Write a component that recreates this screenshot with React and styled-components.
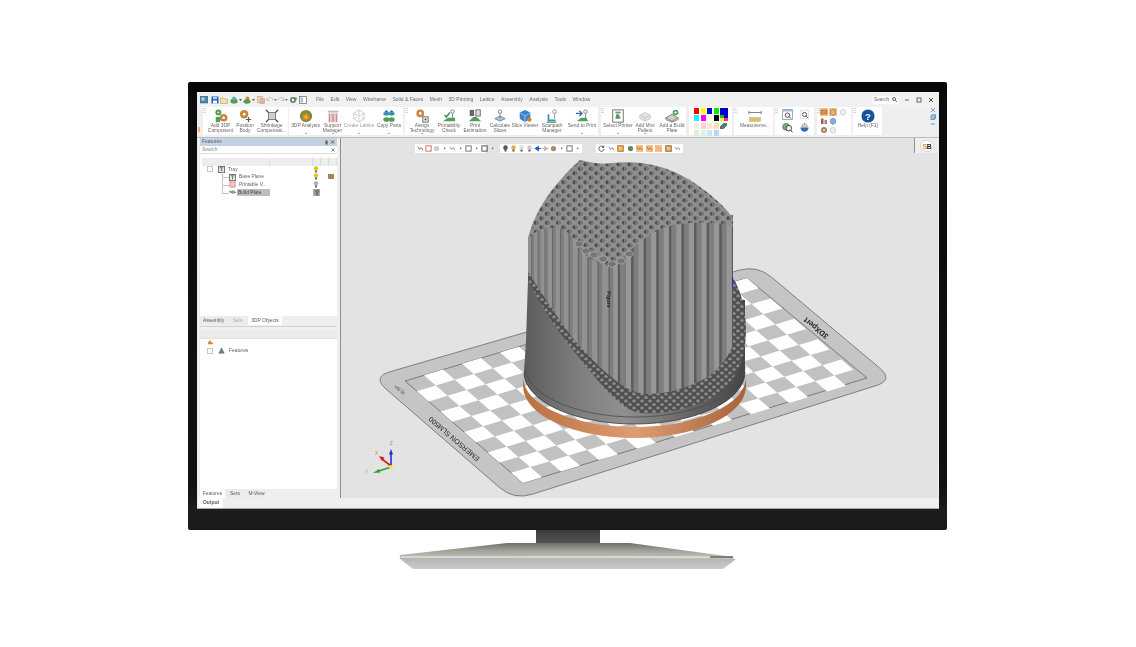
import React from "react";
import styled, { createGlobalStyle } from "styled-components";

const Global = createGlobalStyle`
  html, body { margin: 0; padding: 0; background: #fff; }
  body { font-family: "Liberation Sans", Arial, sans-serif; }
  #root { width: 1136px; height: 647px; overflow: hidden; }
`;

const Page = styled.div`
  width: 1136px; height: 647px; padding-top: 82px; box-sizing: border-box;
  display: flex; flex-direction: column; align-items: center; background: #fff;
`;
const Monitor = styled.div`
  width: 759px; height: 448px; box-sizing: border-box; margin-left: -1px;
  padding: 10px 8px 21px 9px; border-radius: 2px;
  background: linear-gradient(#060606 0, #0b0b0b 20px, #111 400px, #1c1c1c 428px, #191919 100%);
`;
const StandArt = styled.svg`
  display: block; width: 340px; height: 42px; margin-left: -1px; flex: none;
`;
const Screen = styled.div`
  width: 742px; height: 417px; background: #efefef; display: flex; flex-direction: column;
  overflow: hidden; filter: blur(0.35px); color: #555; font-size: 4.9px; line-height: 5.4px;
`;
const TitleBar = styled.div`
  height: 15px; flex: none; display: flex; align-items: center; padding: 0 4px 0 3px; background: #f1f1f1;
`;
const Quick = styled.div`
  display: flex; align-items: center; width: 116px; flex: none;
`;
const QuickIcon = styled.svg`
  width: ${p => p.$w || 8}px; height: 8px; flex: none; display: block; margin-right: ${p => p.$mr}px;
`;
const Menu = styled.nav`
  display: flex; gap: 6.5px; color: #6b6b6b; font-size: 5px;
`;
const SearchBox = styled.div`
  margin-left: auto; width: 27px; height: 8px; background: #fff; display: flex; align-items: center;
  justify-content: space-between; padding: 0 2px; box-sizing: border-box; color: #666; font-size: 4.8px;
`;
const WinButtons = styled.div`
  display: flex; margin-left: 5px; gap: 5px; align-items: center;
`;
const RibbonRow = styled.div`
  height: 29px; flex: none; display: flex; padding: 0 0 1px 6px; position: relative;
  border-bottom: 1px solid #bdbdbd;
`;
const Tick = styled.span`
  position: absolute; left: 1px; top: 20px; width: 1.5px; height: 5px; background: #f3b36f;
`;
const Group = styled.div`
  display: flex; background: #fff; height: 28px; flex: none; position: relative; width: ${p => p.$w}px;
  margin-right: ${p => p.$mr}px;
`;
const Grip = styled.div`
  width: 3px; flex: none; margin-top: 1px; height: 6px;
  background: repeating-linear-gradient(#cfdbe7 0 1px, #fff 1px 2px);
`;
const Tool = styled.div`
  width: ${p => p.$w}px; flex: none; display: flex; flex-direction: column; align-items: center;
  text-align: center; color: ${p => (p.$muted ? "#9a9a9a" : "#666")}; position: relative; white-space: nowrap;
`;
const ToolIcon = styled.div`
  height: 15px; flex: none; display: flex; align-items: center; justify-content: center; padding-top: 1px;
  & > svg { width: 14px; height: 14px; display: block; }
`;
const Caret = styled.span`
  position: absolute; bottom: 1px; left: 50%; margin-left: -1px; width: 0; height: 0;
  border-left: 1px solid transparent; border-right: 1px solid transparent; border-top: 1.5px solid #555;
`;
const Palette = styled.div`
  display: grid; grid-template-columns: repeat(4, 6.5px) 8px; grid-template-rows: 7px 8px 7px 6px;
  padding: 1px 0 0 5px; align-items: start;
`;
const Swatch = styled.div`
  background: ${p => p.$c}; height: ${p => p.$h || 5.5}px; width: ${p => p.$w || 5.4}px;
`;
const IconGrid = styled.div`
  display: grid; grid-template-columns: repeat(${p => p.$cols}, 1fr); flex: 1; padding: ${p => p.$pad};
  align-items: center; justify-items: center; gap: 1px;
  & svg { width: ${p => p.$size}px; height: ${p => p.$size}px; display: block; }
`;
const Cell = styled.div`
  background: ${p => (p.$on ? "#f9bd7c" : "transparent")}; display: flex;
`;
const SideIcons = styled.div`
  position: absolute; right: 3px; top: 0; display: flex; flex-direction: column; gap: 1px;
  & svg { width: 6px; height: 6px; display: block; }
`;
const Main = styled.div`
  flex: 1; min-height: 0; display: flex; background: #efefef;
`;
const Side = styled.aside`
  width: 143px; flex: none; display: flex; flex-direction: column; padding: 0 3px 0 3px; box-sizing: border-box;
`;
const PanelHead = styled.div`
  height: 8px; flex: none; background: #c5d3e0; color: #54606c; display: flex; align-items: center;
  padding: 0 2px; justify-content: space-between; font-size: 5px;
`;
const Search = styled.div`
  height: 8px; flex: none; background: #fff; color: #8a8a8a; font-style: italic; display: flex; align-items: center;
  justify-content: space-between; padding: 0 2px; box-sizing: border-box; border-bottom: 1px solid #ddd;
`;
const TreeBox = styled.div`
  background: #fff; box-sizing: border-box; flex: ${p => (p.$basis ? `0 0 ${p.$basis}px` : "1")}; min-height: 0;
  padding: ${p => p.$top}px 0 0 2px; display: flex; flex-direction: column;
`;
const ColHead = styled.div`
  height: 8px; flex: none; background: #ededed; display: grid; grid-template-columns: 68px 43px 8px 7.5px 1fr;
  & > i { border-right: 1px solid #dcdcdc; display: block; }
`;
const Row = styled.div`
  height: 7.7px; flex: none; display: flex; align-items: center; padding-left: ${p => p.$indent}px; position: relative;
`;
const RowIcon = styled.svg`
  width: 7px; height: 7px; flex: none; margin-right: ${p => p.$mr}px; display: block;
`;
const RowLabel = styled.span`
  background: ${p => (p.$sel ? "#bdbdbd" : "transparent")}; color: ${p => (p.$sel ? "#444" : "#666")};
  padding: 1px 1px; width: ${p => (p.$sel ? "33px" : "auto")}; box-sizing: border-box; white-space: nowrap;
`;
const Cols = styled.div`
  position: absolute; left: 111px; top: 0; display: grid; grid-template-columns: 8px 7px 8px; align-items: center;
  & svg { width: 6px; height: 7px; display: block; }
`;
const Boxed = styled.div`
  background: ${p => (p.$on ? "#a8a8a8" : "transparent")}; width: 7px; height: 7.5px; display: flex; justify-content: center;
`;
const Expander = styled.span`
  width: 4px; height: 4px; background: #fff; border: 0.5px solid #c9c9c9; margin-right: 5px; flex: none; display: block;
`;
const Connector = styled.span`
  position: absolute; left: 20px; top: -3px; width: 6px; height: 7px;
  border-left: 0.6px solid #c4c4c4; border-bottom: 0.6px solid #c4c4c4;
`;
const Tabs = styled.div`
  display: flex; height: ${p => p.$h}px; flex: none; background: #efefef; border-bottom: ${p => (p.$line ? "1px solid #d2d2d2" : "0")};
  padding-bottom: ${p => (p.$line ? "1px" : "0")};
`;
const Tab = styled.div`
  width: ${p => p.$w}px; display: flex; align-items: center; justify-content: center; background: ${p => (p.$on ? "#fff" : "#ececec")};
  color: ${p => (p.$dim ? "#aaa" : "#5b5b5b")}; font-weight: ${p => (p.$bold ? 700 : 400)};
`;
const LowerBar = styled.div`
  height: 8px; margin: 3px 0 0; flex: none; background: #ebebeb; border-bottom: 1px solid #e0e0e0;
`;
const Viewport = styled.section`
  flex: 1; min-width: 0; background: #e3e3e3; border-left: 1px solid #8e8e8e; display: flex; flex-direction: column;
  position: relative; margin-right: 1px;
`;
const ViewTools = styled.div`
  height: 16px; flex: none; display: flex; align-items: center; padding: 4px 0 0 74px; box-sizing: border-box;
`;
const FloatBar = styled.div`
  display: flex; align-items: center; gap: 1px; height: 9px; background: #fff; padding: 0 2px;
  margin-right: ${p => p.$gap}px; width: ${p => p.$w}px; box-sizing: border-box; justify-content: space-between; flex: none;
`;
const FloatIcon = styled.svg`
  width: 7px; height: 7px; flex: none; display: block; background: ${p => (p.$on ? "#f9bd7c" : "none")};
`;
const Scene = styled.svg`
  flex: 1; min-height: 0; width: 100%; display: block;
`;
const LogoTab = styled.div`
  position: absolute; right: 0; top: 0; width: 23px; height: 15px; border-left: 1px solid #8e8e8e; background: #eee;
  display: flex; align-items: center; justify-content: center;
`;
const Output = styled.div`
  height: 11px; flex: none; display: flex; background: #efefef; padding-left: 2px; border-bottom: 1px solid #aaa; box-sizing: border-box;
`;

/* ---- icons ---- */
const Sv = ({ children }) => <svg viewBox="0 0 16 16">{children}</svg>;
const G = "#4f9d57", O = "#c9853c", B = "#2f6fb5";
const icons = {
  add: <Sv><circle cx="5" cy="4" r="3.4" fill={G} /><circle cx="5" cy="4" r="1.2" fill="#cfe6cf" /><circle cx="11" cy="10" r="4.4" fill={O} /><circle cx="11" cy="10" r="1.5" fill="#fff" /><rect x="2" y="9" width="5" height="6" fill={G} /></Sv>,
  pos: <Sv><circle cx="7" cy="6" r="4.8" fill={O} /><circle cx="7" cy="6" r="1.6" fill="#fff" /><path d="M12 9v6M9 12h6" stroke="#555" strokeWidth="1.4" /></Sv>,
  shr: <Sv><rect x="4" y="4" width="8" height="8" fill="#cfcfcf" stroke="#777" /><path d="M1 1l3 3M15 1l-3 3M1 15l3-3M15 15l-3-3" stroke="#444" strokeWidth="1.3" /></Sv>,
  ana: <Sv><circle cx="8" cy="8" r="7" fill="#6f8e37" /><circle cx="8" cy="9" r="4.4" fill="#d8812c" /><circle cx="8" cy="9" r="2" fill="#e2c22e" /></Sv>,
  sup: <Sv><rect x="2" y="2" width="12" height="2" fill="#b9b9b9" /><path d="M3 5h2v10H3zM7 5h2v10H7zM11 5h2v10h-2z" fill="#cf8f8f" /><path d="M5 5h2v10H5zM9 5h2v10H9z" fill="#e3c6c6" /></Sv>,
  lat: <Sv><path d="M8 1l6 4v6l-6 4-6-4V5zM2 5l12 6M14 5L2 11M8 1v14" fill="none" stroke="#d4d4d4" strokeWidth="1.2" /></Sv>,
  cpy: <Sv><path d="M5 1l3 3H2zM11 1l3 3H8z" fill={B} /><ellipse cx="5" cy="5.5" rx="3.5" ry="2" fill="#2f8fb5" /><ellipse cx="11" cy="5.5" rx="3.5" ry="2" fill="#2f8fb5" /><ellipse cx="5" cy="12" rx="3.5" ry="2.6" fill={G} /><ellipse cx="11" cy="12" rx="3.5" ry="2.6" fill={G} /></Sv>,
  asg: <Sv><circle cx="6" cy="5" r="4.4" fill={O} /><circle cx="6" cy="5" r="1.5" fill="#fff" /><rect x="9" y="9" width="6" height="6" fill="#fff" stroke="#555" /><rect x="11" y="11" width="2" height="2" fill="#333" /></Sv>,
  chk: <Sv><path d="M1 14l6-4h8v4z" fill={G} /><path d="M3 7l2 2 4-5" stroke={G} strokeWidth="2" fill="none" /><circle cx="12" cy="3" r="2" fill="none" stroke="#777" /><path d="M12 5v5" stroke="#777" /></Sv>,
  est: <Sv><rect x="2" y="1" width="5" height="7" fill="#666" /><rect x="9" y="1" width="5" height="7" fill="#ddd" stroke="#666" /><path d="M1 14l5-5h4l5 5z" fill={G} /></Sv>,
  cal: <Sv><path d="M2 11l6-3 6 3-6 3z" fill="#a9bdd1" stroke="#7a8a9a" /><circle cx="8" cy="3" r="2" fill="none" stroke="#777" /><path d="M8 5v5" stroke="#777" /></Sv>,
  vie: <Sv><path d="M8 1l6 3v7l-6 4-6-4V4z" fill="#3e7fcb" /><path d="M8 8l6-4M8 8L2 4M8 8v7" stroke="#aac9ea" /><circle cx="13" cy="12" r="2.5" fill="#d8812c" /></Sv>,
  scn: <Sv><circle cx="11" cy="3" r="2" fill="none" stroke="#888" /><path d="M11 5v6" stroke="#888" /><path d="M4 6v7h8" stroke="#3b93c4" strokeWidth="2" fill="none" /><path d="M2 15h11" stroke={G} strokeWidth="1.5" /></Sv>,
  snd: <Sv><path d="M1 5h6M5 2l3 3-3 3" stroke={B} strokeWidth="1.6" fill="none" /><path d="M2 14l5-4h6l2 4z" fill={G} /><circle cx="12" cy="3" r="2" fill="none" stroke="#777" /><path d="M12 5v5" stroke="#777" /></Sv>,
  prn: <Sv><rect x="2" y="1" width="12" height="14" fill="#fff" stroke="#666" /><path d="M5 11h6l-2-5H6z" fill={G} /><rect x="5" y="3" width="6" height="2" fill="#888" /></Sv>,
  pal: <Sv><path d="M2 7l6-3 6 3v4l-6 3-6-3z" fill="#e0e0e0" stroke="#ccc" /><path d="M2 7l6 3 6-3M8 10v4" fill="none" stroke="#ccc" /></Sv>,
  bld: <Sv><path d="M1 10l7-4 7 4-7 4z" fill="#cfcfcf" stroke="#777" /><path d="M1 10v2l7 3 7-3v-2" fill="none" stroke="#777" /><circle cx="12" cy="4" r="3.2" fill={G} /><path d="M12 2.5v3M10.5 4h3" stroke="#fff" /></Sv>,
  rul: <Sv><path d="M1 4h14M1 2v4M15 2v4" stroke="#777" fill="none" /><rect x="2" y="10" width="12" height="4" fill="#e2c067" stroke="#b99a4a" strokeWidth=".5" /></Sv>,
  win1: <Sv><rect x="1" y="1" width="14" height="14" fill="#fff" stroke="#6b7f93" /><rect x="1" y="1" width="14" height="2.5" fill="#9db6cf" /><circle cx="8" cy="9" r="3.2" fill="none" stroke="#444" strokeWidth="1.3" /><path d="M10 11l3 3" stroke="#444" strokeWidth="1.3" /></Sv>,
  win2: <Sv><rect x="2" y="2" width="12" height="12" fill="none" stroke="#bbb" strokeDasharray="2 1" /><circle cx="8" cy="8" r="3" fill="none" stroke="#444" strokeWidth="1.3" /><path d="M10 10l3 3" stroke="#444" strokeWidth="1.3" /></Sv>,
  cube: <Sv><circle cx="6" cy="7" r="5" fill="#77ad77" stroke="#3f7a3f" /><circle cx="10" cy="9" r="4" fill="#e8f3e8" stroke="#333" strokeWidth="1.2" /><path d="M13 12l2 3" stroke="#333" strokeWidth="1.4" /></Sv>,
  dome: <Sv><path d="M2 8h12a6 6 0 0 1-12 0z" fill={B} /><path d="M4 7a4 4 0 0 1 8 0z" fill="#e6e6e6" stroke="#888" /><path d="M8 1v3" stroke="#888" /></Sv>,
  or1: <Sv><rect x="2" y="4" width="12" height="8" fill="#d2955a" stroke="#8a5a2c" /></Sv>,
  or2: <Sv><path d="M3 5l5-3 5 3v7l-5 3-5-3z" fill="#d7b48c" stroke="#8a5a2c" /></Sv>,
  gr1: <Sv><path d="M3 5l5-3 5 3v7l-5 3-5-3z" fill="#ececec" stroke="#bbb" /></Sv>,
  bar: <Sv><rect x="2" y="3" width="5" height="11" fill="#b5564e" /><rect x="9" y="6" width="5" height="8" fill="#888" /></Sv>,
  cub: <Sv><path d="M3 5l5-3 5 3v7l-5 3-5-3z" fill="#7fb0d8" stroke="#4a6f90" /></Sv>,
  gea: <Sv><circle cx="8" cy="8" r="6" fill="#a2865f" /><circle cx="8" cy="8" r="2" fill="#eee" /></Sv>,
  help: <Sv><circle cx="8" cy="8" r="7.5" fill="#12539c" /><text x="8" y="12" fontSize="11" fontWeight="700" fill="#fff" textAnchor="middle" fontFamily="Liberation Sans">?</text></Sv>,
};

const T = ({ w, l, i, caret, muted }) => (
  <Tool $w={w} $muted={muted}>
    <ToolIcon>{icons[i]}</ToolIcon>
    {l.map(s => <span key={s}>{s}</span>)}
    {caret && <Caret />}
  </Tool>
);

const Bulb = ({ c = "#e8c31c" }) => (
  <svg viewBox="0 0 6 8"><circle cx="3" cy="2.7" r="2.5" fill={c} /><rect x="1.8" y="5" width="2.4" height="2.4" fill="#666" /></svg>
);

const quickSet = [
  { mr: 3, art: <g><rect width="8" height="7" fill="#4f86ad" stroke="#355" strokeWidth=".5" /><rect x="1.5" y="1.5" width="3" height="3" fill="#bcd" /></g> },
  { mr: 1, art: <g><rect x=".5" y=".5" width="7" height="7" fill="#1d62b3" /><rect x="2" y="4.5" width="4" height="3" fill="#fff" /><rect x="2" y="1" width="4" height="2" fill="#bcd6f0" /></g> },
  { mr: 2, art: <path d="M.5 2h3l1 1h3v4.5h-7z" fill="#f2e0a6" stroke="#a98f4a" strokeWidth=".5" /> },
  { mr: 1, art: <g><ellipse cx="4" cy="5" rx="3.6" ry="2.6" fill="#4f9d57" /><circle cx="4" cy="2.5" r="2" fill="#6ab0a0" /></g> },
  { w: 3, mr: 1, art: <path d="M0 3h3L1.5 5z" fill="#555" /> },
  { mr: 1, art: <g><circle cx="4.5" cy="2.4" r="2" fill="#d9823a" /><ellipse cx="4" cy="5.5" rx="3.5" ry="2.2" fill="#4f9d57" /></g> },
  { w: 3, mr: 2, art: <path d="M0 3h3L1.5 5z" fill="#555" /> },
  { mr: 1, art: <g><rect x=".5" y=".5" width="5" height="6" fill="#f1d8c8" stroke="#b97" strokeWidth=".6" /><rect x="3" y="2.5" width="4.5" height="5" fill="#e8b4a0" stroke="#b97" strokeWidth=".6" /></g> },
  { mr: 0, art: <path d="M1 4.5a3 3 0 0 1 6 0M1 1.5v3h3" stroke="#bbb" strokeWidth=".8" fill="none" /> },
  { w: 3, mr: 0, art: <path d="M0 3h3L1.5 5z" fill="#777" /> },
  { mr: 0, art: <path d="M7 4.5a3 3 0 0 0-6 0M7 1.5v3H4" stroke="#bbb" strokeWidth=".8" fill="none" /> },
  { w: 3, mr: 1, art: <path d="M0 3h3L1.5 5z" fill="#777" /> },
  { mr: 2, art: <g><circle cx="4" cy="4" r="3" fill="#777" /><circle cx="4" cy="4" r="1.2" fill="#fff" /><path d="M5 1l3 1-1 3" fill="#4f9d57" /></g> },
  { mr: 0, art: <g><rect x=".5" y=".5" width="7" height="7" fill="#fff" stroke="#667" strokeWidth=".7" /><rect x="1.5" y="1.5" width="2.5" height="5" fill="#a9bdd1" /></g> },
];

const MiniIcon = ({ c, on, k = "rect" }) => (
  <FloatIcon viewBox="0 0 8 8" $on={on}>
    {k === "rect" && <rect x="1" y="1" width="6" height="6" fill="none" stroke={c} strokeWidth="1" />}
    {k === "blob" && <circle cx="4" cy="4" r="3" fill={c} />}
    {k === "bulb" && <g><circle cx="4" cy="3" r="2.6" fill={c} /><rect x="2.8" y="5.4" width="2.4" height="2" fill="#555" /></g>}
    {k === "arrow" && <path d="M0 4h5M3 1.8L6.5 4 3 6.2z" stroke={c} strokeWidth="1.2" fill={c} />}
    {k === "larrow" && <path d="M8 4H3M5 1.8L1.5 4 5 6.2z" stroke={c} strokeWidth="1.2" fill={c} />}
    {k === "ring" && <path d="M6.5 2.5A3 3 0 1 0 7 4.5M6.5 .8v2h-2" stroke={c} fill="none" strokeWidth=".9" />}
    {k === "zig" && <path d="M1 2l2 3 2-2 2 3" stroke={c} fill="none" strokeWidth=".9" />}
    {k === "caret" && <path d="M3 3.2h2.4L4.2 5z" fill={c} />}
  </FloatIcon>
);

/* ---- 3D scene ---- */
const L = [405, 381], TP = [747, 278], BT = [523, 483];
const quad = (i, j) => {
  const u = [(TP[0] - L[0]) / 18, (TP[1] - L[1]) / 18];
  const v = [(BT[0] - L[0]) / 10, (BT[1] - L[1]) / 10];
  const p = (a, b) => `${(L[0] + u[0] * a + v[0] * b).toFixed(1)},${(L[1] + u[1] * a + v[1] * b).toFixed(1)}`;
  return `${p(i, j)} ${p(i + 1, j)} ${p(i + 1, j + 1)} ${p(i, j + 1)}`;
};
const cells = [];
for (let i = 0; i < 18; i++) for (let j = 0; j < 10; j++) if ((i + j) % 2) cells.push(quad(i, j));

const rounded = (pts, r) => {
  let d = "";
  pts.forEach((p, k) => {
    const a = pts[(k + pts.length - 1) % pts.length], b = pts[(k + 1) % pts.length];
    const to = (q) => { const dx = q[0] - p[0], dy = q[1] - p[1], l = Math.hypot(dx, dy); return [p[0] + (dx / l) * r, p[1] + (dy / l) * r]; };
    const s = to(a), e = to(b);
    d += `${k ? "L" : "M"}${s[0].toFixed(1)},${s[1].toFixed(1)} Q${p[0]},${p[1]} ${e[0].toFixed(1)},${e[1].toFixed(1)} `;
  });
  return d + "Z";
};
const boardPath = rounded([[372, 377], [757, 265], [894, 380], [514, 500]], 19);

const DOME = "M530,237 C532,215 552,185 580,160 C590,162 600,165 612,163 C640,160 665,165 690,180 C708,192 724,205 733,218 L733,226 C715,222 690,220 663,228 C648,234 634,247 623,257 L608,267 L587,257 C580,245 572,235 563,229 C550,226 538,228 530,237 Z";
const RIBS = "M528,238 L534,220 L733,215 L733,345 C725,365 710,378 693,384 C675,392 655,395 640,393 C625,390 605,374 577,343 C560,322 540,290 528,272 Z";
const BAND = "M528,268 C540,290 560,322 577,343 C605,374 625,390 640,393 C655,395 675,392 693,384 C710,378 725,365 733,345 L733,278 C741,290 746,310 746,330 C746,360 735,382 718,394 C695,408 665,415 640,413 C622,410 605,390 577,355 C560,335 540,305 528,280 Z";

const ribs = [];
{
  let x = 528, w = 5.5;
  while (x < 733) {
    ribs.push({ x, w, left: x < 608 });
    if (x < 608) w = Math.min(11, w + 0.55); else w = 12.6;
    x += w;
  }
}
const whiteHex = [[579, 244], [586, 251], [594, 255], [603, 259], [612, 264], [621, 261], [629, 254]];
const hexPts = (cx, cy, r) => [0, 1, 2, 3, 4, 5].map(n => `${(cx + r * Math.cos(Math.PI / 3 * n)).toFixed(1)},${(cy + r * 0.72 * Math.sin(Math.PI / 3 * n)).toFixed(1)}`).join(" ");

const Model = () => (
  <g>
    <path d="M523,377 L523,386 A111.5,52 0 0 0 746,386 L746,377 A111.5,50 0 0 1 523,377 Z" fill="url(#copper)" />
    <path d="M528,280 L526,340 L524,372 A110.5,52 0 0 0 745,372 L745,300 Z" fill="url(#metal)" />
    <path d="M525,366 A110,51 0 0 0 745,366" fill="none" stroke="#4a4a4a" strokeWidth=".8" />
    <path d="M524,372 A110.5,52 0 0 0 745,372" fill="none" stroke="#3a3a3a" strokeWidth=".8" />
    <path d={BAND} fill="url(#hexSmall)" />
    <g clipPath="url(#ribClip)">
      <rect x="520" y="210" width="225" height="200" fill="#7a7a7a" />
      {ribs.map(r => {
        const a = r.left ? 0.6 : 0.42, b = r.left ? 0.14 : 0.2;
        return (
          <g key={r.x}>
            <rect x={r.x} y="210" width={r.w * a} height="200" fill={r.left ? "#929292" : "#979797"} />
            <rect x={r.x + r.w * a} y="210" width={r.w * b} height="200" fill={r.left ? "#686868" : "#5b5b5b"} />
            <rect x={r.x + r.w * (a + b)} y="210" width={r.w * (1 - a - b)} height="200" fill="#7e7e7e" />
          </g>
        );
      })}
    </g>
    <path d={DOME} fill="url(#hexBig)" />
    {whiteHex.map(h => <polygon key={h[0]} points={hexPts(h[0], h[1], 4.6)} fill="#757575" stroke="#d8d8d8" strokeWidth=".45" />)}
    <rect x="732" y="277" width="1" height="11" fill="#2b2bd8" />
    <text transform="translate(607,291) rotate(90)" fontSize="5.5" fill="#222" fontFamily="Liberation Sans" fontWeight="700">Figure</text>
  </g>
);

const Triad = () => (
  <g fontFamily="Liberation Sans" fontSize="4.5">
    <path d="M391,466V454" stroke="#1f2fd8" strokeWidth="1.6" /><path d="M391,449l-2,5.5h4z" fill="#1f2fd8" />
    <path d="M391,466L382,459" stroke="#e01b1b" strokeWidth="1.6" /><path d="M379,456l5.5,1.5-2.6,3.4z" fill="#e01b1b" />
    <path d="M391,467L379,471" stroke="#22a822" strokeWidth="1.6" /><path d="M373,473l6-4 1.3,3.6z" fill="#22a822" />
    <circle cx="391" cy="467" r="2" fill="#f2ec2a" />
    <text x="390" y="445" fill="#6a7fe6">Z</text>
    <text x="375" y="455" fill="#e66a6a">X</text>
    <text x="365" y="474" fill="#68c468">Y</text>
  </g>
);

const App = () => (
  <Page>
    <Global />
    <Monitor>
      <Screen>
        <TitleBar>
          <Quick>
            {quickSet.map((q, n) => <QuickIcon key={n} viewBox={`0 0 ${q.w || 8} 8`} $w={q.w} $mr={q.mr}>{q.art}</QuickIcon>)}
          </Quick>
          <Menu>
            {["File", "Edit", "View", "Wireframe", "Solid & Faces", "Mesh", "3D Printing", "Lattice", "Assembly", "Analysis", "Tools", "Window"].map(m => <span key={m}>{m}</span>)}
          </Menu>
          <SearchBox>Search
            <svg width="5" height="5" viewBox="0 0 6 6"><circle cx="2.5" cy="2.5" r="1.8" fill="none" stroke="#444" /><path d="M4 4l2 2" stroke="#444" /></svg>
          </SearchBox>
          <WinButtons>
            <svg width="7" height="6" viewBox="0 0 7 6"><path d="M1 3h4" stroke="#666" /></svg>
            <svg width="7" height="6" viewBox="0 0 7 6"><rect x="1" y="1" width="4" height="4" fill="none" stroke="#666" /></svg>
            <svg width="7" height="6" viewBox="0 0 7 6"><path d="M1 1l4 4M5 1L1 5" stroke="#444" /></svg>
          </WinButtons>
        </TitleBar>
        <RibbonRow>
          <Tick />
          <Group $w={85} $mr={1}><Grip />
            <T w={29} i="add" l={["Add 3DP", "Component"]} />
            <T w={20} i="pos" l={["Position", "Body"]} />
            <T w={33} i="shr" l={["Shrinkage", "Compensat..."]} />
          </Group>
          <Group $w={114} $mr={2}>
            <T w={33} i="ana" l={["3DP Analysis"]} caret />
            <T w={21} i="sup" l={["Support", "Manager"]} caret />
            <T w={32} i="lat" l={["Create Lattice"]} caret muted />
            <T w={28} i="cpy" l={["Copy Parts"]} caret />
          </Group>
          <Group $w={193} $mr={3}><Grip />
            <T w={28} i="asg" l={["Assign", "Technology"]} caret />
            <T w={26} i="chk" l={["Printability", "Check"]} />
            <T w={26} i="est" l={["Print", "Estimation"]} />
            <T w={24} i="cal" l={["Calculate", "Slices"]} />
            <T w={26} i="vie" l={["Slice Viewer"]} />
            <T w={28} i="scn" l={["Scanpath", "Manager"]} />
            <T w={32} i="snd" l={["Send to Print"]} caret />
          </Group>
          <Group $w={85} $mr={3}><Grip />
            <T w={28} i="prn" l={["Select Printer"]} caret />
            <T w={26} i="pal" l={["Add Mini", "Pallets"]} caret />
            <T w={28} i="bld" l={["Add a Build", "Plate"]} />
          </Group>
          <Group $w={43} $mr={2}>
            <Palette>
              {["#f00", "#ff0", "#00d", "#0e0"].map(c => <Swatch key={c} $c={c} />)}<Swatch $c="#00c" $w={7.5} $h={6.5} />
              {["#0ff", "#f0f", "#fff", "#000"].map(c => <Swatch key={c} $c={c} />)}<Swatch $c="conic-gradient(#00d 0 25%, #e44 0 50%, #ee4 0 75%, #2b2 0)" $w={7.5} $h={6} />
              {["#efefef", "#ffd2d2", "#ffe9c8", "#ffe0a8"].map(c => <Swatch key={c} $c={c} />)}<Swatch $c="linear-gradient(135deg, transparent 30%, #557a7a 30% 70%, transparent 70%)" $w={7} $h={6} />
              {["#dff0d0", "#d4f7e6", "#bfeaf7", "#b9d6fb"].map(c => <Swatch key={c} $c={c} />)}
            </Palette>
          </Group>
          <Group $w={39} $mr={2}><Grip /><T w={36} i="rul" l={["Measureme..."]} /></Group>
          <Group $w={39} $mr={3}><Grip />
            <IconGrid $cols={2} $size={11} $pad="2px 1px">
              {icons.win1}{icons.win2}{icons.cube}{icons.dome}
            </IconGrid>
          </Group>
          <Group $w={34} $mr={2}><Grip />
            <IconGrid $cols={3} $size={8} $pad="1px 4px 4px 0">
              <Cell $on>{icons.or1}</Cell><Cell $on>{icons.or2}</Cell><Cell>{icons.gr1}</Cell>
              <Cell>{icons.bar}</Cell><Cell>{icons.cub}</Cell><Cell />
              <Cell>{icons.gea}</Cell><Cell>{icons.gr1}</Cell><Cell />
            </IconGrid>
          </Group>
          <Group $w={29} $mr={0}><Grip /><T w={24} i="help" l={["Help (F1)"]} /></Group>
          <SideIcons>
            <svg viewBox="0 0 6 6"><path d="M1 1l4 4M5 1L1 5" stroke="#6f9fc8" /></svg>
            <svg viewBox="0 0 6 6"><rect x="1" y="2" width="3.5" height="3.5" fill="none" stroke="#6f9fc8" /><rect x="2" y=".7" width="3.5" height="3.5" fill="none" stroke="#6f9fc8" /></svg>
            <svg viewBox="0 0 6 6"><path d="M1 3h4" stroke="#6f9fc8" /></svg>
          </SideIcons>
        </RibbonRow>
        <Main>
          <Side>
            <PanelHead><span>Features</span>
              <svg width="10" height="5" viewBox="0 0 10 5"><rect x="0.5" y="0.5" width="2" height="4" fill="#555" /><path d="M6 .5l3 3M9 .5l-3 3" stroke="#555" /></svg>
            </PanelHead>
            <Search>Search<svg width="4" height="4" viewBox="0 0 4 4"><path d="M.5.5l3 3M3.5.5l-3 3" stroke="#666" strokeWidth=".8" /></svg></Search>
            <TreeBox $basis={162} $top={3.5}>
              <ColHead><i /><i /><i /><i /><i /></ColHead>
              <Row $indent={5}><Expander />
                <RowIcon $mr={2} viewBox="0 0 8 8"><rect x=".5" y=".5" width="7" height="7" fill="#e6e6e6" stroke="#666" /><path d="M2 2h4M4 2v4" stroke="#3b8a3b" /></RowIcon>
                <RowLabel>Tray</RowLabel>
                <Cols><Bulb /></Cols>
              </Row>
              <Row $indent={27}><Connector />
                <RowIcon $mr={2} viewBox="0 0 8 8"><rect x=".5" y=".5" width="7" height="7" fill="#e6e6e6" stroke="#666" /><path d="M2 2h4M4 2v4" stroke="#3b8a3b" /></RowIcon>
                <RowLabel>Base Plane</RowLabel>
                <Cols><Bulb /><span /><svg viewBox="0 0 6 7"><rect y="1" width="6" height="5" fill="#a58456" /></svg></Cols>
              </Row>
              <Row $indent={27}><Connector />
                <RowIcon $mr={2} viewBox="0 0 8 8"><rect x="1" y="1" width="6" height="6" fill="#f2c9c9" stroke="#d35555" strokeDasharray="1 .6" /></RowIcon>
                <RowLabel>Printable V...</RowLabel>
                <Cols><Bulb c="#b0b0b0" /></Cols>
              </Row>
              <Row $indent={27}><Connector />
                <RowIcon $mr={1} viewBox="0 0 8 8"><path d="M0 3l4 2 4-1-3-2z" fill="#9aa" stroke="#555" strokeWidth=".5" /></RowIcon>
                <RowLabel $sel>Build Plate</RowLabel>
                <Cols><Boxed $on><Bulb c="#7a7a7a" /></Boxed></Cols>
              </Row>
            </TreeBox>
            <Tabs $h={9} $line>
              <Tab $w={27}>Assembly</Tab><Tab $w={21} $dim>Sets</Tab><Tab $on $w={34}>3DP Objects</Tab>
            </Tabs>
            <LowerBar />
            <TreeBox $top={0}>
              <Row $indent={5}><RowIcon $mr={0} viewBox="0 0 8 8"><path d="M1 6h6V4H5L4 1 1 4z" fill="#dd8a2a" /></RowIcon></Row>
              <Row $indent={5}><Expander />
                <RowIcon $mr={3} viewBox="0 0 8 8"><path d="M4 1l3 6H1z" fill="#5a8a7a" stroke="#445" strokeWidth=".5" /></RowIcon>
                <RowLabel>Features</RowLabel>
              </Row>
            </TreeBox>
            <Tabs $h={9}>
              <Tab $on $w={25}>Features</Tab><Tab $w={20}>Sets</Tab><Tab $w={23}>M-View</Tab>
            </Tabs>
          </Side>
          <Viewport>
            <ViewTools>
              <FloatBar $w={71} $gap={14}>
                <MiniIcon c="#555" k="zig" /><MiniIcon c="#c85a5a" /><MiniIcon c="#ccc" k="blob" /><MiniIcon c="#555" k="caret" /><MiniIcon c="#8a6a6a" k="zig" /><MiniIcon c="#555" k="caret" /><MiniIcon c="#666" /><MiniIcon c="#555" k="caret" /><MiniIcon c="#444" /><MiniIcon c="#555" k="caret" />
              </FloatBar>
              <FloatBar $w={82} $gap={14}>
                <MiniIcon c="#555" k="bulb" /><MiniIcon c="#d9b33a" k="bulb" /><MiniIcon c="#ddd" k="bulb" /><MiniIcon c="#ccc" k="bulb" /><MiniIcon c="#1c5fc0" k="larrow" /><MiniIcon c="#bbb" k="arrow" /><MiniIcon c="#a98c6c" k="blob" /><MiniIcon c="#555" k="caret" /><MiniIcon c="#666" /><MiniIcon c="#555" k="caret" />
              </FloatBar>
              <FloatBar $w={87} $gap={0}>
                <MiniIcon c="#333" k="ring" /><MiniIcon c="#666" k="zig" /><MiniIcon c="#9a7a3a" on /><MiniIcon c="#5b8a5b" k="blob" /><MiniIcon c="#7a6a3a" on k="zig" /><MiniIcon c="#7a6a3a" on k="zig" /><MiniIcon c="#e59ae0" on k="zig" /><MiniIcon c="#7a6a3a" on /><MiniIcon c="#4f9d57" k="zig" />
              </FloatBar>
            </ViewTools>
            <LogoTab>
              <svg width="14" height="12" viewBox="0 0 14 12" fontFamily="Liberation Sans" fontWeight="700" fontSize="7">
                <ellipse cx="7" cy="6" rx="6.6" ry="5.6" fill="#fff" stroke="#bbb" strokeWidth=".5" />
                <text x="2.4" y="8.6" fill="#e8832a">S</text><text x="6.8" y="8.6" fill="#222">B</text>
              </svg>
            </LogoTab>
            <Scene viewBox="341 154 597 344" preserveAspectRatio="none">
              <defs>
                <linearGradient id="metal" x1="0" x2="1" y1="0" y2="0">
                  <stop offset="0" stopColor="#5c5c5c" /><stop offset=".25" stopColor="#7e7e7e" /><stop offset=".45" stopColor="#909090" /><stop offset=".7" stopColor="#6c6c6c" /><stop offset="1" stopColor="#454545" />
                </linearGradient>
                <linearGradient id="copper" x1="0" x2="1" y1="0" y2="0">
                  <stop offset="0" stopColor="#b8703e" /><stop offset=".5" stopColor="#dd9d72" /><stop offset="1" stopColor="#a8623a" />
                </linearGradient>
                <pattern id="hexBig" width="11" height="9" patternUnits="userSpaceOnUse">
                  <rect width="11" height="9" fill="#8f8f8f" />
                  <polygon points="0,2.25 1.5,.3 3,.3 3,4.2 1.5,4.2" fill="#505050" />
                  <polygon points="3,.3 4.5,.3 6,2.25 4.5,4.2 3,4.2" fill="#757575" />
                  <polygon points="5.5,6.75 7,4.8 8.5,4.8 8.5,8.7 7,8.7" fill="#505050" />
                  <polygon points="8.5,4.8 10,4.8 11.5,6.75 10,8.7 8.5,8.7" fill="#757575" />
                </pattern>
                <pattern id="hexSmall" width="8" height="7" patternUnits="userSpaceOnUse">
                  <rect width="8" height="7" fill="#505050" />
                  <polygon points="0,2 2,0 4,2 3.4,3.2 .6,3.2" fill="#8c8c8c" />
                  <polygon points="4,5.5 6,3.5 8,5.5 7.4,6.7 4.6,6.7" fill="#8c8c8c" />
                </pattern>
                <clipPath id="ribClip"><path d={RIBS} /></clipPath>
              </defs>
              <path d={boardPath} fill="#c5c5c5" stroke="#5a5a5a" strokeWidth=".7" />
              <polygon points="405,381 747,278 867,378 523,483" fill="#c1c1c1" stroke="#4a4a4a" strokeWidth=".6" />
              {cells.map(c => <polygon key={c} points={c} fill="#fff" />)}
              <text transform="translate(480,458) rotate(220.5)" fontFamily="Liberation Sans" fontSize="7.1" fill="#222">EMERSON SLM500</text>
              <text transform="translate(829,335.5) rotate(219)" fontFamily="Liberation Sans" fontSize="7.6" fontWeight="700" fill="#222">3DXpert</text>
              <text transform="translate(405,393) rotate(218)" fontFamily="Liberation Sans" fontSize="3.6" fill="#333">3D Sys</text>
              <path d="M394,385l11,6" stroke="#777" strokeWidth=".4" />
              <Model />
              <Triad />
            </Scene>
          </Viewport>
        </Main>
        <Output><Tab $on $w={24} $bold>Output</Tab></Output>
      </Screen>
    </Monitor>
    <StandArt viewBox="0 0 340 42">
      <defs>
        <linearGradient id="neck" x1="0" x2="0" y1="0" y2="1"><stop offset="0" stopColor="#3a3a3a" /><stop offset="1" stopColor="#555552" /></linearGradient>
        <linearGradient id="plane" x1="0" x2="0" y1="0" y2="1"><stop offset="0" stopColor="#6f6f6a" /><stop offset=".5" stopColor="#a4a49d" /><stop offset="1" stopColor="#c4c4bd" /></linearGradient>
        <linearGradient id="band" x1="0" x2="0" y1="0" y2="1"><stop offset="0" stopColor="#b4b4b2" /><stop offset="1" stopColor="#cbcbc9" /></linearGradient>
      </defs>
      <rect x="138" y="0" width="64" height="14" fill="url(#neck)" />
      <path d="M2,25 L109,13 H232 L335,27 L336,29 H2 Z" fill="url(#plane)" />
      <path d="M1,28 L15,39 H325 L338,29 Z" fill="url(#band)" />
      <path d="M3,27 H330" stroke="#f2f2ee" strokeWidth="1.2" />
      <path d="M312,27 H335" stroke="#5a5a58" strokeWidth="1.4" />
    </StandArt>
  </Page>
);

export default App;
